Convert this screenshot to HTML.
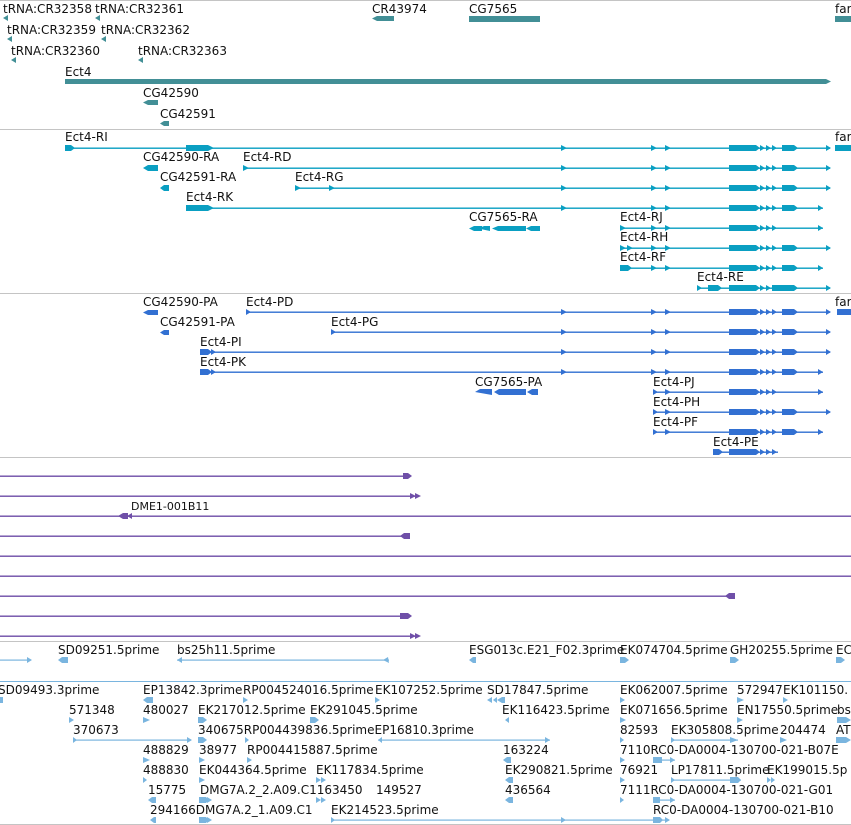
<!DOCTYPE html>
<html><head><meta charset="utf-8"><style>
html,body{margin:0;padding:0;background:#fff;width:851px;height:825px;overflow:hidden}
svg{display:block}
text{font-family:"DejaVu Sans","Liberation Sans",sans-serif;font-size:12px;fill:#111}
</style></head><body>
<svg width="851" height="825" viewBox="0 0 851 825" xmlns="http://www.w3.org/2000/svg">
<defs>
<g id="a562"><polygon points="561,-3 567,0 561,3"/></g>
<g id="a651"><polygon points="651,-3 657,0 651,3"/><polygon points="665,-3 671,0 665,3"/></g>
<g id="core"><polygon points="729,-3 756,-3 760,0 756,3 729,3"/><polygon points="760,-3 765,0 760,3"/><polygon points="766,-3 771,0 766,3"/><polygon points="772,-3 777,0 772,3"/></g>
<g id="b2"><polygon points="782,-3 794,-3 798,0 794,3 782,3"/></g>
<g id="endL"><polygon points="826,-3 831,0 826,3"/></g>
<g id="endS"><polygon points="818,-3 823,0 818,3"/></g>
</defs>
<!-- separators -->
<g fill="#c4c4c4">
<rect x="0" y="0" width="851" height="1"/>
<rect x="0" y="129" width="851" height="1"/>
<rect x="0" y="293" width="851" height="1"/>
<rect x="0" y="457" width="851" height="1"/>
<rect x="0" y="641" width="851" height="1"/>
<rect x="0" y="824" width="851" height="1"/>
</g>

<!-- gene track -->
<text x="3" y="13">tRNA:CR32358</text><text x="95" y="13">tRNA:CR32361</text>
<text x="7" y="34">tRNA:CR32359</text><text x="101" y="34">tRNA:CR32362</text>
<text x="11" y="55">tRNA:CR32360</text><text x="138" y="55">tRNA:CR32363</text>
<text x="372" y="13">CR43974</text><text x="469" y="13">CG7565</text><text x="835" y="13">far</text>
<text x="65" y="76">Ect4</text><text x="143" y="97">CG42590</text><text x="160" y="118">CG42591</text>
<g fill="#428f96">
<polygon points="3,18 8,15 8,21"/><polygon points="95,18 100,15 100,21"/>
<polygon points="7,39 12,36 12,42"/><polygon points="101,39 106,36 106,42"/>
<polygon points="11,60 16,57 16,63"/><polygon points="138,60 143,57 143,63"/>
<polygon points="372,18.5 377,16 394,16 394,21 377,21"/>
<rect x="469" y="16" width="71" height="6"/>
<rect x="835" y="16" width="16" height="6"/>
<polygon points="65,79 826,79 831,81.5 826,84 65,84"/>
<polygon points="143,102.5 148,100 158,100 158,105 148,105"/>
<polygon points="160,123.5 164,121 169,121 169,126 164,126"/>
</g>

<!-- transcripts (cyan) -->
<text x="65" y="141">Ect4-RI</text>
<text x="143" y="161">CG42590-RA</text><text x="243" y="161">Ect4-RD</text>
<text x="160" y="181">CG42591-RA</text><text x="295" y="181">Ect4-RG</text>
<text x="186" y="201">Ect4-RK</text>
<text x="469" y="221">CG7565-RA</text><text x="620" y="221">Ect4-RJ</text>
<text x="620" y="241">Ect4-RH</text><text x="620" y="261">Ect4-RF</text>
<text x="697" y="281">Ect4-RE</text><text x="835" y="141">far</text>
<g fill="#0a9fc2">
<rect x="65" y="147.5" width="765" height="1.4"/><polygon points="65,145 71,145 75,148 71,151 65,151"/>
<polygon points="186,145 208,145 214,148 208,151 186,151"/>
<rect x="835" y="145" width="16" height="6"/>
<use href="#a562" y="148"/><use href="#a651" y="148"/><use href="#core" y="148"/><use href="#b2" y="148"/><use href="#endL" y="148"/>
<polygon points="143,168 148,165 158,165 158,171 148,171"/>
<rect x="243" y="167.5" width="587" height="1.4"/><polygon points="243,165 249,168 243,171"/>
<use href="#a562" y="168"/><use href="#a651" y="168"/><use href="#core" y="168"/><use href="#b2" y="168"/><use href="#endL" y="168"/>
<polygon points="160,188 164,185 169,185 169,191 164,191"/>
<rect x="295" y="187.5" width="535" height="1.4"/><polygon points="295,185 301,188 295,191"/><polygon points="329,185 335,188 329,191"/>
<use href="#a562" y="188"/><use href="#a651" y="188"/><use href="#core" y="188"/><use href="#b2" y="188"/><use href="#endL" y="188"/>
<rect x="186" y="207.5" width="637" height="1.4"/><polygon points="186,205 208,205 214,208 208,211 186,211"/>
<use href="#a562" y="208"/><use href="#a651" y="208"/><use href="#core" y="208"/><use href="#b2" y="208"/><use href="#endS" y="208"/>
<polygon points="469,228.5 474,226 482,226 482,231 474,231"/><polygon points="478,228.5 484,226 490,226 490,231"/><polygon points="492,228.5 498,226 526,226 526,231 498,231"/><polygon points="526,228.5 531,226 540,226 540,231 531,231"/>
<rect x="620" y="227.5" width="203" height="1.4"/><polygon points="620,225 626,228 620,231"/>
<use href="#a651" y="228"/><use href="#core" y="228"/><use href="#endS" y="228"/>
<rect x="620" y="247.5" width="210" height="1.4"/><polygon points="620,245 626,248 620,251"/><polygon points="627,245 633,248 627,251"/>
<use href="#a651" y="248"/><use href="#core" y="248"/><use href="#b2" y="248"/><use href="#endL" y="248"/>
<rect x="620" y="267.5" width="203" height="1.4"/><polygon points="620,265 628,265 632,268 628,271 620,271"/>
<use href="#a651" y="268"/><use href="#core" y="268"/><use href="#b2" y="268"/><use href="#endS" y="268"/>
<rect x="697" y="287.5" width="133" height="1.4"/><polygon points="697,285 702,288 697,291"/><polygon points="708,285 718,285 722,288 718,291 708,291"/>
<use href="#core" y="288"/><polygon points="772,285 794,285 798,288 794,291 772,291"/><use href="#endL" y="288"/>
</g>

<!-- proteins (blue) -->
<text x="143" y="306">CG42590-PA</text><text x="246" y="306">Ect4-PD</text><text x="835" y="306">far</text>
<text x="160" y="326">CG42591-PA</text><text x="331" y="326">Ect4-PG</text>
<text x="200" y="346">Ect4-PI</text><text x="200" y="366">Ect4-PK</text>
<text x="475" y="386">CG7565-PA</text><text x="653" y="386">Ect4-PJ</text>
<text x="653" y="406">Ect4-PH</text><text x="653" y="426">Ect4-PF</text><text x="713" y="446">Ect4-PE</text>
<g fill="#3270d2">
<polygon points="143,312.5 148,310 158,310 158,315 148,315"/>
<rect x="246" y="311.5" width="584" height="1.4"/><polygon points="246,309 251,312 246,315"/><rect x="837" y="309" width="14" height="6"/>
<use href="#a562" y="312"/><use href="#a651" y="312"/><use href="#core" y="312"/><use href="#b2" y="312"/><use href="#endL" y="312"/>
<polygon points="160,332.5 164,330 169,330 169,335 164,335"/>
<rect x="331" y="331.5" width="499" height="1.4"/><polygon points="331,329 336,332 331,335"/>
<use href="#a562" y="332"/><use href="#a651" y="332"/><use href="#core" y="332"/><use href="#b2" y="332"/><use href="#endL" y="332"/>
<rect x="200" y="351.5" width="630" height="1.4"/><polygon points="200,349 208,349 212,352 208,355 200,355"/><polygon points="211,349 216,352 211,355"/>
<use href="#a562" y="352"/><use href="#a651" y="352"/><use href="#core" y="352"/><use href="#b2" y="352"/><use href="#endL" y="352"/>
<rect x="200" y="371.5" width="623" height="1.4"/><polygon points="200,369 208,369 212,372 208,375 200,375"/><polygon points="211,369 216,372 211,375"/>
<use href="#a562" y="372"/><use href="#a651" y="372"/><use href="#core" y="372"/><use href="#b2" y="372"/><use href="#endS" y="372"/>
<polygon points="475,392 480,389 492,389 492,395"/><polygon points="494,392 499,389 526,389 526,395 499,395"/><polygon points="527,392 532,389 538,389 538,395 532,395"/>
<rect x="653" y="391.5" width="170" height="1.4"/><polygon points="653,389 658,392 653,395"/><polygon points="665,389 671,392 665,395"/>
<use href="#core" y="392"/><use href="#endS" y="392"/>
<rect x="653" y="411.5" width="177" height="1.4"/><polygon points="653,409 658,412 653,415"/><polygon points="665,409 671,412 665,415"/>
<use href="#core" y="412"/><use href="#b2" y="412"/><use href="#endL" y="412"/>
<rect x="653" y="431.5" width="170" height="1.4"/><polygon points="653,429 658,432 653,435"/><polygon points="665,429 671,432 665,435"/>
<use href="#core" y="432"/><use href="#b2" y="432"/><use href="#endS" y="432"/>
<rect x="713" y="451.5" width="65" height="1.4"/><polygon points="713,449 719,449 723,452 719,455 713,455"/>
<use href="#core" y="452"/>
</g>

<!-- purple -->
<text x="131" y="510" style="font-size:11px">DME1-001B11</text>
<g fill="#6f4fa8">
<rect x="0" y="475.5" width="410" height="1.4"/><polygon points="403,473 408,473 412,476 408,479 403,479"/>
<rect x="0" y="495.5" width="418" height="1.4"/><polygon points="410,493 416,496 410,499"/><polygon points="415,493 421,496 415,499"/>
<rect x="0" y="515.5" width="851" height="1.4"/><polygon points="118,516 123,513 128,513 128,519 123,519"/><polygon points="127,516 132,513 132,519"/>
<rect x="0" y="535.5" width="410" height="1.4"/><polygon points="400,536 404,533 410,533 410,539 404,539"/>
<rect x="0" y="555.5" width="851" height="1.4"/>
<rect x="0" y="575.5" width="851" height="1.4"/>
<rect x="0" y="595.5" width="735" height="1.4"/><polygon points="725,596 729,593 735,593 735,599 729,599"/>
<rect x="0" y="615.5" width="410" height="1.4"/><polygon points="400,613 408,613 412,616 408,619 400,619"/>
<rect x="0" y="635.5" width="418" height="1.4"/><polygon points="410,633 416,636 410,639"/><polygon points="415,633 421,636 415,639"/>
</g>

<!-- ESTs -->
<g>
<text x="58" y="654">SD09251.5prime</text><text x="177" y="654">bs25h11.5prime</text>
<text x="469" y="654">ESG013c.E21_F02.3prime</text><text x="620" y="654">EK074704.5prime</text><text x="730" y="654">GH20255.5prime</text><text x="836" y="654">EC</text>
<text x="-2" y="694">SD09493.3prime</text><text x="143" y="694">EP13842.3prime</text><text x="243" y="694">RP004524016.5prime</text><text x="375" y="694">EK107252.5prime</text><text x="487" y="694">SD17847.5prime</text><text x="620" y="694">EK062007.5prime</text><text x="737" y="694">572947</text><text x="783" y="694">EK101150.</text>
<text x="69" y="714">571348</text><text x="143" y="714">480027</text><text x="198" y="714">EK217012.5prime</text><text x="310" y="714">EK291045.5prime</text><text x="502" y="714">EK116423.5prime</text><text x="620" y="714">EK071656.5prime</text><text x="737" y="714">EN17550.5prime</text><text x="837" y="714">bs</text>
<text x="73" y="734">370673</text><text x="198" y="734">340675RP004439836.5primeEP16810.3prime</text><text x="620" y="734">82593</text><text x="671" y="734">EK305808.5prime</text><text x="780" y="734">204474</text><text x="836" y="734">AT</text>
<text x="143" y="754">488829</text><text x="199" y="754">38977</text><text x="247" y="754">RP004415887.5prime</text><text x="503" y="754">163224</text><text x="620" y="754">7110RC0-DA0004-130700-021-B07E</text>
<text x="143" y="774">488830</text><text x="199" y="774">EK044364.5prime</text><text x="316" y="774">EK117834.5prime</text><text x="505" y="774">EK290821.5prime</text><text x="620" y="774">76921</text><text x="671" y="774">LP17811.5prime</text><text x="767" y="774">EK199015.5p</text>
<text x="148" y="794">15775</text><text x="200" y="794">DMG7A.2_2.A09.C1163450</text><text x="376" y="794">149527</text><text x="505" y="794">436564</text><text x="620" y="794">7111RC0-DA0004-130700-021-G01</text>
<text x="150" y="814">294166DMG7A.2_1.A09.C1</text><text x="331" y="814">EK214523.5prime</text><text x="653" y="814">RC0-DA0004-130700-021-B10</text>
</g>
<g fill="#7ab5df">
<rect x="0" y="681" width="851" height="1"/>
<rect x="0" y="659.5" width="30" height="1.2"/><polygon points="27,657 32,660 27,663"/>
<polygon points="58,660 62,657 68,657 68,663 62,663"/>
<rect x="177" y="659.5" width="212" height="1.2"/><polygon points="177,660 182,657 182,663"/><polygon points="383,660 388,657 389,663"/>
<polygon points="469,660 473,657 476,657 476,663 473,663"/>
<polygon points="620,657 625,657 629,660 625,663 620,663"/>
<polygon points="730,657 735,657 739,660 735,663 730,663"/>
<polygon points="836,657 841,657 845,660 841,663 836,663"/>
<!-- row 2 y700 -->
<rect x="0" y="697" width="3" height="6"/>
<polygon points="143,700 147,697 153,697 153,703 147,703"/>
<polygon points="243,697 248,700 243,703"/><polygon points="375,697 380,700 375,703"/>
<polygon points="487,700 492,697 492,703"/><polygon points="493,700 497,697 497,703"/><polygon points="497,700 502,697 505,697 505,703 502,703"/>
<polygon points="620,697 625,700 620,703"/><polygon points="737,697 744,700 737,703"/><polygon points="783,697 788,700 783,703"/>
<!-- row 3 y720 -->
<polygon points="69,717 74,720 69,723"/><polygon points="143,717 150,720 143,723"/>
<polygon points="198,717 203,717 207,720 203,723 198,723"/><polygon points="310,717 315,717 319,720 315,723 310,723"/>
<polygon points="505,720 509,717 509,723"/>
<polygon points="620,717 626,720 620,723"/><polygon points="737,717 743,720 737,723"/>
<polygon points="837,717 846,717 851,720 846,723 837,723"/>
<!-- row 4 y740 -->
<rect x="73" y="739.5" width="118" height="1.2"/><polygon points="73,737 77,740 73,743"/><polygon points="187,737 192,740 187,743"/>
<polygon points="198,737 203,737 207,740 203,743 198,743"/><polygon points="245,737 249,740 245,743"/>
<rect x="378" y="739.5" width="172" height="1.2"/><polygon points="378,740 382,737 382,743"/><polygon points="545,737 550,740 545,743"/>
<polygon points="620,737 624,740 620,743"/>
<rect x="671" y="739.5" width="67" height="1.2"/><polygon points="671,737 675,740 671,743"/><polygon points="730,737 738,740 730,743"/>
<polygon points="780,737 787,740 780,743"/><polygon points="836,737 846,737 851,740 846,743 836,743"/>
<!-- row 5 y760 -->
<polygon points="143,757 150,760 143,763"/><polygon points="199,757 205,760 199,763"/><polygon points="247,757 252,760 247,763"/>
<polygon points="503,760 507,757 511,757 511,763 507,763"/>
<polygon points="620,757 625,760 620,763"/>
<rect x="653" y="759.5" width="22" height="1.2"/><polygon points="653,757 662,757 662,763 653,763"/><polygon points="670,757 675,760 670,763"/>
<!-- row 6 y780 -->
<polygon points="143,777 147,780 143,783"/><polygon points="199,777 205,780 199,783"/><polygon points="316,777 321,780 316,783"/><polygon points="321,777 326,780 321,783"/>
<polygon points="505,780 509,777 513,777 513,783 509,783"/>
<polygon points="620,777 625,780 620,783"/>
<rect x="671" y="779.5" width="70" height="1.2"/><polygon points="671,777 675,780 671,783"/><polygon points="730,777 738,777 741,780 738,783 730,783"/>
<polygon points="767,777 771,780 767,783"/><polygon points="771,777 775,780 771,783"/>
<!-- row 7 y800 -->
<polygon points="148,800 152,797 156,797 156,803 152,803"/>
<polygon points="199,797 206,797 209,800 206,803 199,803"/><polygon points="207,797 212,800 207,803"/>
<polygon points="316,797 321,800 316,803"/><polygon points="321,797 326,800 321,803"/>
<polygon points="505,800 509,797 513,797 513,803 509,803"/>
<polygon points="620,797 624,800 620,803"/>
<rect x="653" y="799.5" width="22" height="1.2"/><polygon points="653,797 660,797 660,803 653,803"/><polygon points="670,797 675,800 670,803"/>
<!-- row 8 y820 -->
<polygon points="150,820 154,817 156,817 156,823 154,823"/>
<polygon points="199,817 206,817 209,820 206,823 199,823"/><polygon points="207,817 212,820 207,823"/>
<rect x="331" y="819.5" width="338" height="1.2"/><polygon points="331,817 335,820 331,823"/><polygon points="561,817 566,820 561,823"/>
<polygon points="653,817 660,817 663,820 660,823 653,823"/><polygon points="665,817 670,820 665,823"/>
</g>
</svg>
</body></html>
